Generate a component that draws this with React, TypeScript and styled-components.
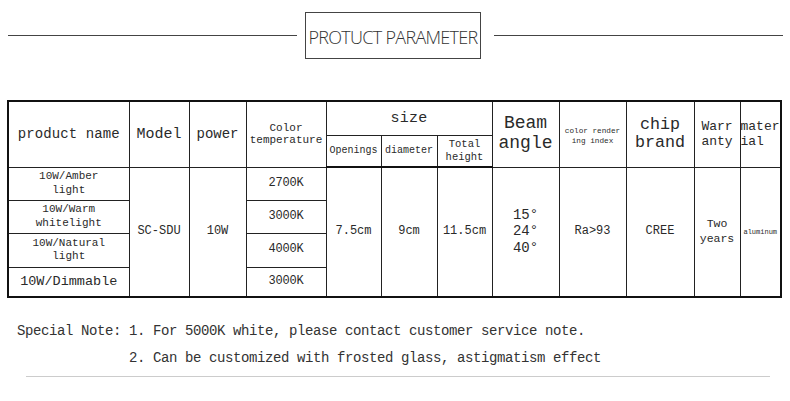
import React from 'react';
import styled, { createGlobalStyle } from 'styled-components';

const GlobalStyle = createGlobalStyle`
  html, body {
    margin: 0;
    padding: 0;
    background: #fff;
  }
  body {
    width: 790px;
    height: 401px;
    overflow: hidden;
    font-family: "Liberation Mono", "DejaVu Sans Mono", monospace;
    color: #222;
  }
`;

const Page = styled.div`
  width: 790px;
  padding-top: 12px;
`;

const TitleBar = styled.header`
  display: flex;
  align-items: center;
  padding: 0 7px 0 8px;
`;

const Rule = styled.div`
  flex: 1;
  height: 1px;
  background: #444;
`;

const TitleBox = styled.div`
  flex: 0 0 176px;
  height: 47px;
  box-sizing: border-box;
  border: 1px solid #444;
  margin: 0 13px 0 8px;
  padding-top: 2px;
  display: flex;
  align-items: center;
  justify-content: center;
  white-space: nowrap;
  font-family: "Open Sans", Lato, "Liberation Sans", sans-serif;
  font-weight: 300;
  font-size: 18px;
  color: #333;
  letter-spacing: -0.7px;
`;

const Table = styled.table`
  margin: 41px 0 0 7px;
  width: 773px;
  table-layout: fixed;
  border-collapse: collapse;
  border: 2px solid #111;
`;

const Cell = styled.td<{ $size?: number; $ls?: number; $lh?: number }>`
  border: 1px solid #222;
  padding: 0;
  text-align: center;
  vertical-align: middle;
  font-size: ${(p) => p.$size ?? 12}px;
  letter-spacing: ${(p) => p.$ls ?? 0}px;
  line-height: ${(p) => p.$lh ?? 1.15};
  color: #2a2a2a;
  overflow: hidden;
  white-space: pre-line;
`;

const HeadRow = styled.tr<{ $h: number; $last?: boolean }>`
  height: ${(p) => p.$h}px;
  ${(p) => (p.$last ? 'td { border-bottom: 2px solid #111; }' : '')}
`;

const Row = styled.tr<{ $h: number }>`
  height: ${(p) => p.$h}px;
`;

const Notes = styled.div`
  display: grid;
  grid-template-columns: auto 1fr;
  row-gap: 9px;
  margin: 24px 0 0 17px;
  font-size: 14px;
  letter-spacing: -0.4px;
  line-height: 18px;
  color: #333;
  white-space: pre;
`;

const Divider = styled.div`
  height: 1px;
  background: #ccc;
  margin: 9px 20px 0 26px;
`;

const widths = [121, 60, 57, 80, 55, 56, 55, 67, 67, 68, 46, 41];

const names = [
  { text: '10W/Amber\nlight', size: 11, lh: 1.2 },
  { text: '10W/Warm\nwhitelight', size: 11, lh: 1.2 },
  { text: '10W/Natural\nlight', size: 11, lh: 1.2 },
  { text: '10W/Dimmable', size: 13.5, lh: 1.2 },
];
const temps = ['2700K', '3000K', '4000K', '3000K'];
const rowHeights = [33, 33, 34, 30];

export default function App() {
  return (
    <Page>
      <GlobalStyle />
      <TitleBar>
        <Rule />
        <TitleBox>PROTUCT PARAMETER</TitleBox>
        <Rule />
      </TitleBar>

      <Table>
        <colgroup>
          {widths.map((w, i) => (
            <col key={i} style={{ width: w }} />
          ))}
        </colgroup>
        <tbody>
          <HeadRow $h={34}>
            <Cell rowSpan={2} $size={14} $ls={0.1}>product name</Cell>
            <Cell rowSpan={2} $size={15}>Model</Cell>
            <Cell rowSpan={2} $size={14}>power</Cell>
            <Cell rowSpan={2} $size={11}>{'Color\ntemperature'}</Cell>
            <Cell colSpan={3} $size={15} $ls={0.3}>size</Cell>
            <Cell rowSpan={2} $size={18} $lh={1.1}>{'Beam\nangle'}</Cell>
            <Cell rowSpan={2} $size={7.7} $lh={1.3} style={{ verticalAlign: 'top', paddingTop: 24 }}>{'color render\ning index'}</Cell>
            <Cell rowSpan={2} $size={16.7} $lh={1.1}>{'chip\nbrand'}</Cell>
            <Cell rowSpan={2} $size={13} $lh={1.2}>{'Warr\nanty'}</Cell>
            <Cell rowSpan={2} $size={13} $lh={1.2} style={{ textAlign: 'left' }}>{'mater\nial'}</Cell>
          </HeadRow>
          <HeadRow $h={32} $last>
            <Cell $size={10}>Openings</Cell>
            <Cell $size={10}>diameter</Cell>
            <Cell $size={10.5} $lh={1.2}>{'Total\nheight'}</Cell>
          </HeadRow>
          {names.map((n, i) => (
            <Row key={i} $h={rowHeights[i]}>
              <Cell $size={n.size} $lh={n.lh}>{n.text}</Cell>
              {i === 0 && (
                <>
                  <Cell rowSpan={4} $size={12}>SC-SDU</Cell>
                  <Cell rowSpan={4} $size={12}>10W</Cell>
                </>
              )}
              <Cell $size={12} $ls={-0.2}>{temps[i]}</Cell>
              {i === 0 && (
                <>
                  <Cell rowSpan={4} $size={12}>7.5cm</Cell>
                  <Cell rowSpan={4} $size={12}>9cm</Cell>
                  <Cell rowSpan={4} $size={12}>11.5cm</Cell>
                  <Cell rowSpan={4} $size={14} $lh={1.2}>{'15°\n24°\n40°'}</Cell>
                  <Cell rowSpan={4} $size={12}>Ra&gt;93</Cell>
                  <Cell rowSpan={4} $size={12}>CREE</Cell>
                  <Cell rowSpan={4} $size={11.5} $lh={1.25}>{'Two\nyears'}</Cell>
                  <Cell rowSpan={4} $size={7}>aluminum</Cell>
                </>
              )}
            </Row>
          ))}
        </tbody>
      </Table>

      <Notes>
        <span>Special Note: </span>
        <span>1. For 5000K white, please contact customer service note.</span>
        <span />
        <span>2. Can be customized with frosted glass, astigmatism effect</span>
      </Notes>
      <Divider />
    </Page>
  );
}
